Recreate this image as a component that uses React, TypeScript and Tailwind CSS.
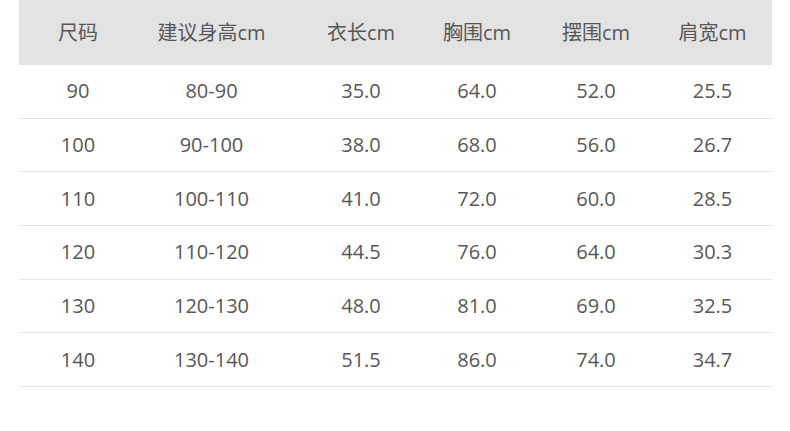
import React from "react";

const headers = ["尺码", "建议身高cm", "衣长cm", "胸围cm", "摆围cm", "肩宽cm"];
const rows = [
  ["90", "80-90", "35.0", "64.0", "52.0", "25.5"],
  ["100", "90-100", "38.0", "68.0", "56.0", "26.7"],
  ["110", "100-110", "41.0", "72.0", "60.0", "28.5"],
  ["120", "110-120", "44.5", "76.0", "64.0", "30.3"],
  ["130", "120-130", "48.0", "81.0", "69.0", "32.5"],
  ["140", "130-140", "51.5", "86.0", "74.0", "34.7"],
];

export default function App() {
  return (
    <div
      className="w-[790px] h-[431px] bg-white overflow-hidden text-[#575757] text-[20px]"
      style={{ fontFamily: '"Open Sans", "Noto Sans CJK SC", sans-serif' }}
    >
      <div className="ml-[19px] w-[753px]">
        <div className="grid grid-cols-[118px_149px_150px_82px_156px_77px_1fr] h-[65px] bg-[#e3e3e3] items-center">
          {headers.map((h) => (
            <div key={h} className="text-center whitespace-nowrap">
              {h}
            </div>
          ))}
          <div />
        </div>
        {rows.map((r, i) => (
          <div
            key={i}
            className="grid grid-cols-[118px_149px_150px_82px_156px_77px_1fr] h-[53.67px] border-b border-[#e6e6e6] items-center"
          >
            {r.map((c, j) => (
              <div key={j} className="text-center whitespace-nowrap">
                {c}
              </div>
            ))}
            <div />
          </div>
        ))}
      </div>
    </div>
  );
}
